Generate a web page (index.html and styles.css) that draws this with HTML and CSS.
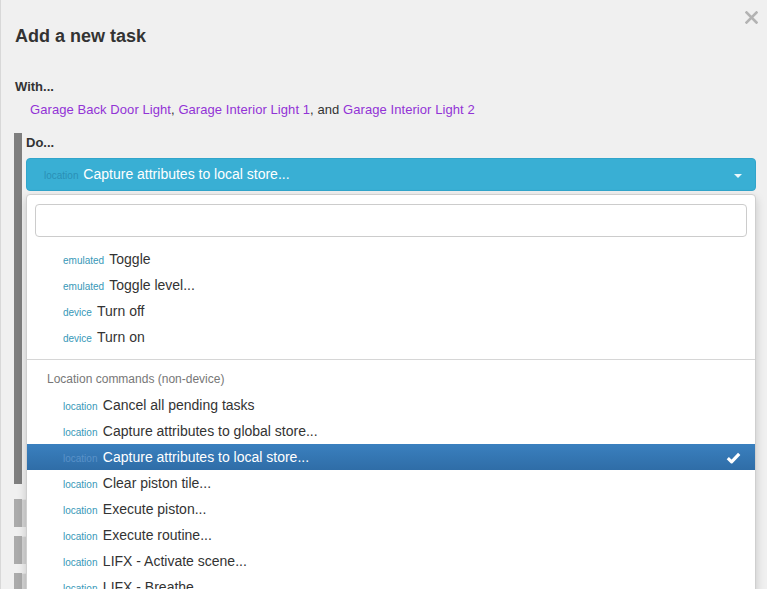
FILE: index.html
```html
<!DOCTYPE html>
<html>
<head>
<meta charset="utf-8">
<link rel="stylesheet" href="styles.css">
</head>
<body>
<div class="modal">
  <button class="close" aria-label="Close">
    <svg width="13" height="13" viewBox="0 0 13 13"><path d="M1.5 1.5 L11.5 11.5 M11.5 1.5 L1.5 11.5" stroke="#b3b3b3" stroke-width="2.6" stroke-linecap="square" fill="none"/></svg>
  </button>
  <div class="header"><h1 class="title">Add a new task</h1></div>

  <div class="section-label with-label">With...</div>
  <div class="devices"><span class="dev">Garage Back Door Light</span>, <span class="dev">Garage Interior Light 1</span>, and <span class="dev">Garage Interior Light 2</span></div>

  <div class="do-block">
    <div class="section-label">Do...</div>
    <div class="select-wrap">
      <div class="select">
        <span class="tag tag-btn">location</span> <span class="sel-text">Capture attributes to local store...</span>
        <span class="caret"></span>
      </div>
      <div class="dropdown">
        <div class="search"><div class="search-input"></div></div>
        <div class="results">
          <ul class="group group-first">
            <li class="opt"><span class="tag">emulated</span> Toggle</li>
            <li class="opt"><span class="tag">emulated</span> Toggle level...</li>
            <li class="opt"><span class="tag">device</span> Turn off</li>
            <li class="opt"><span class="tag">device</span> Turn on</li>
          </ul>
          <ul class="group group-sep">
            <li class="group-label">Location commands (non-device)</li>
            <li class="opt"><span class="tag">location</span> Cancel all pending tasks</li>
            <li class="opt"><span class="tag">location</span> Capture attributes to global store...</li>
            <li class="opt active"><span class="tag">location</span> Capture attributes to local store...
              <svg class="check" width="15" height="12" viewBox="0 0 15 12"><path d="M1.8 6.2 L5.6 9.8 L13.2 1.8" stroke="#fff" stroke-width="3.2" fill="none" stroke-linejoin="round"/></svg>
            </li>
            <li class="opt"><span class="tag">location</span> Clear piston tile...</li>
            <li class="opt"><span class="tag">location</span> Execute piston...</li>
            <li class="opt"><span class="tag">location</span> Execute routine...</li>
            <li class="opt"><span class="tag">location</span> LIFX - Activate scene...</li>
            <li class="opt"><span class="tag">location</span> LIFX - Breathe...</li>
          </ul>
        </div>
      </div>
    </div>
    <div class="do-body"></div>
  </div>

  <div class="stub"></div>
  <div class="stub"></div>
  <div class="stub"></div>
</div>
</body>
</html>
```

FILE: styles.css
```css
html, body {
  margin: 0;
  padding: 0;
  height: 589px;
  overflow: hidden;
}
body {
  background: #f0f0f0;
  font-family: "Liberation Sans", Arial, Helvetica, sans-serif;
  color: #333;
  box-shadow: inset 1px 0 0 #d8d8d8;
}
.modal {
  position: relative;
  padding: 0 11px 0 15px;
}
.close {
  position: absolute;
  top: 11px;
  right: 9px;
  border: 0;
  background: none;
  padding: 0;
  width: 13px;
  height: 13px;
  display: block;
}
.close svg { display: block; }
.header { padding-top: 26px; }
.title {
  margin: 0;
  font-size: 18px;
  line-height: 20px;
  font-weight: bold;
  color: #333;
}
.section-label {
  font-size: 13px;
  line-height: 18px;
  font-weight: bold;
  color: #333;
}
.with-label { margin-top: 32px; }
.devices {
  padding-top: 5px;
  padding-left: 15px;
  font-size: 13px;
  line-height: 18px;
  letter-spacing: 0.07px;
  color: #333;
}
.dev { color: #9233d6; }

.do-block {
  margin-top: 14px;
  margin-left: -1px;
  border-left: 8px solid #7f7f7f;
  padding-left: 4px;
  padding-top: 1px;
}
.select-wrap {
  position: relative;
  margin-top: 6px;
}
.select {
  height: 33px;
  box-sizing: border-box;
  background: #39afd4;
  border: 1px solid #31a5cb;
  border-radius: 4px;
  padding-left: 17px;
  font-size: 14px;
  line-height: 31px;
  color: #fff;
  position: relative;
}
.tag {
  font-size: 10px;
  line-height: 10px;
  color: #3798b8;
  margin-right: 1px;
}
.opt .tag { margin-right: 1.5px; }
.tag-btn { color: #2a8fb6; }
.caret {
  position: absolute;
  right: 13px;
  top: 15px;
  width: 0;
  height: 0;
  border-top: 4px solid rgba(255,255,255,0.9);
  border-left: 4px solid transparent;
  border-right: 4px solid transparent;
}
.dropdown {
  position: absolute;
  z-index: 5;
  top: 36px;
  left: 0;
  right: 0;
  height: 430px;
  background: #fff;
  border: 1px solid #cfcfcf;
  border-radius: 4px 4px 0 0;
  box-shadow: 0 4px 10px rgba(0,0,0,0.18);
}
.search { padding: 9px 8px 9px; }
.search-input {
  height: 33px;
  box-sizing: border-box;
  border: 1px solid #ccc;
  border-radius: 4px;
  background: #fff;
}
.group {
  list-style: none;
  margin: 0;
  padding: 0;
}
.group-first { padding-bottom: 9px; }
.group-sep {
  border-top: 1px solid #d6d6d6;
  padding-top: 6px;
}
.opt {
  position: relative;
  padding: 3px 20px 3px 36px;
  font-size: 14px;
  line-height: 20px;
  color: #333;
  white-space: nowrap;
}
.group-label {
  padding: 3px 20px;
  font-size: 12px;
  line-height: 20px;
  color: #777;
}
.opt.active {
  background: linear-gradient(#3a80bf, #2f6da7);
  color: #fff;
}
.opt.active .tag { color: #5a92c9; }
.check {
  position: absolute;
  right: 14px;
  top: 8px;
}
.do-body { height: 293px; }
.stub {
  margin-left: -1px;
  margin-top: 9px;
  height: 28px;
  border-left: 8px solid #ababab;
  background: #d4d4d4;
  box-shadow: inset 0 1px 0 #e6e6e6;
}
.do-block + .stub { margin-top: 15px; }
```
